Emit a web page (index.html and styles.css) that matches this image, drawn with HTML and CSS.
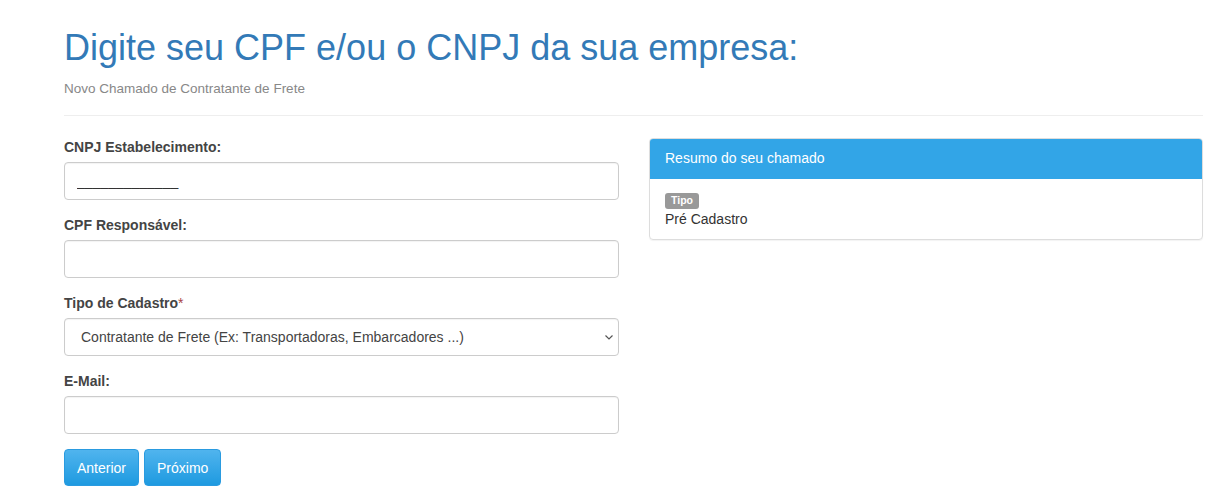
FILE: index.html
```html
<!DOCTYPE html>
<html lang="pt-BR">

<head>
  <meta charset="UTF-8">
  <meta name="viewport" content="width=device-width, initial-scale=1.0">
  <title>Novo Chamado</title>
  <link rel="stylesheet" href="styles.css">
</head>

<body>
  <div class="container">
    <!-- Page header -->
    <div class="page-header">
      <h1>Digite seu CPF e/ou o CNPJ da sua empresa:</h1>
      <p class="subtitle">Novo Chamado de Contratante de Frete</p>
    </div>

    <div class="row">
      <!-- Form column -->
      <form class="col-form" id="chamadoForm">
        <div class="form-group">
          <label for="cnpj">CNPJ Estabelecimento:</label>
          <input type="text" id="cnpj" name="cnpj" class="form-control" value="_____________">
        </div>

        <div class="form-group">
          <label for="cpf">CPF Responsável:</label>
          <input type="text" id="cpf" name="cpf" class="form-control">
        </div>

        <div class="form-group">
          <label for="tipo">Tipo de Cadastro<span class="required">*</span></label>
          <div class="select-wrap">
            <select id="tipo" name="tipo" class="form-control">
              <option>Contratante de Frete (Ex: Transportadoras, Embarcadores ...)</option>
            </select>
            <svg class="chevron" width="8" height="5" viewBox="0 0 8 5">
              <path d="M0.5 0.5 L4 4 L7.5 0.5" fill="none" stroke="#555" stroke-width="1.2" />
            </svg>
          </div>
        </div>

        <div class="form-group">
          <label for="email">E-Mail:</label>
          <input type="email" id="email" name="email" class="form-control">
        </div>

        <div class="actions">
          <button type="button" class="btn">Anterior</button>
          <button type="submit" class="btn">Próximo</button>
        </div>
      </form>

      <!-- Summary column -->
      <div class="col-summary">
        <div class="panel">
          <div class="panel-heading">Resumo do seu chamado</div>
          <div class="panel-body">
            <span class="badge">Tipo</span>
            <span class="summary-value">Pré Cadastro</span>
          </div>
        </div>
      </div>
    </div>
  </div>
</body>

</html>
```

FILE: styles.css
```css
/* Reset some default styles */
body,
html {
  margin: 0;
  padding: 0;
  font-family: "Liberation Sans", Arial, sans-serif;
  font-size: 14px;
  line-height: 20px;
  color: #333;
  background-color: #fff;
}

.container {
  width: 1139px;
  padding: 28px 0 0 64px;
}

/* Page header */
.page-header {
  padding-bottom: 16px;
  border-bottom: 1px solid #eee;
}

h1 {
  margin: 0;
  font-size: 36px;
  line-height: 40px;
  font-weight: normal;
  color: #337ab7;
}

.subtitle {
  margin: 11px 0 0;
  font-size: 13.5px;
  line-height: 20px;
  color: #888;
}

/* Two columns */
.row {
  display: flex;
  gap: 30px;
  margin-top: 21px;
}

.col-form {
  width: 555px;
}

.col-summary {
  flex: 1;
}

/* Form styles */
.form-group {
  margin-bottom: 15px;
}

label {
  display: block;
  margin-bottom: 5px;
  font-size: 14px;
  font-weight: bold;
  color: #444;
}

.required {
  color: #a94442;
  font-weight: normal;
}

.form-control {
  display: block;
  box-sizing: border-box;
  width: 100%;
  height: 38px;
  padding: 0 12px;
  font-family: inherit;
  font-size: 14px;
  color: #333;
  background-color: #fff;
  border: 1px solid #ccc;
  border-radius: 4px;
  box-shadow: inset 0 1px 1px rgba(0, 0, 0, 0.05);
}

/* Select with its own chevron */
.select-wrap {
  position: relative;
}

select.form-control {
  appearance: none;
  -webkit-appearance: none;
  padding: 0 24px 0 16px;
  color: #444;
}

.chevron {
  position: absolute;
  right: 6px;
  top: 17px;
  pointer-events: none;
}

.actions {
  display: flex;
  gap: 5px;
}

.btn {
  height: 37px;
  padding: 0 12px;
  font-family: inherit;
  font-size: 14px;
  color: #fff;
  background: linear-gradient(#50b4ee, #1e9ae0);
  border: 1px solid #2a9be0;
  border-radius: 4px;
  cursor: pointer;
}

/* Summary panel */
.panel {
  margin-top: 1px;
  border: 1px solid #ddd;
  border-radius: 4px;
  box-shadow: 0 1px 1px rgba(0, 0, 0, 0.05);
  overflow: hidden;
}

.panel-heading {
  height: 39px;
  line-height: 39px;
  padding: 0 15px;
  color: #fff;
  background-color: #32a5e7;
  border-bottom: 1px solid #32a5e7;
}

.panel-body {
  display: flex;
  flex-direction: column;
  align-items: flex-start;
  padding: 14px 15px 10px;
}

.badge {
  padding: 2px 6px 3px;
  font-size: 10.5px;
  line-height: 10.5px;
  font-weight: bold;
  color: #fff;
  background-color: #999;
  border-radius: 3px;
}

.summary-value {
  line-height: 20px;
}
```
